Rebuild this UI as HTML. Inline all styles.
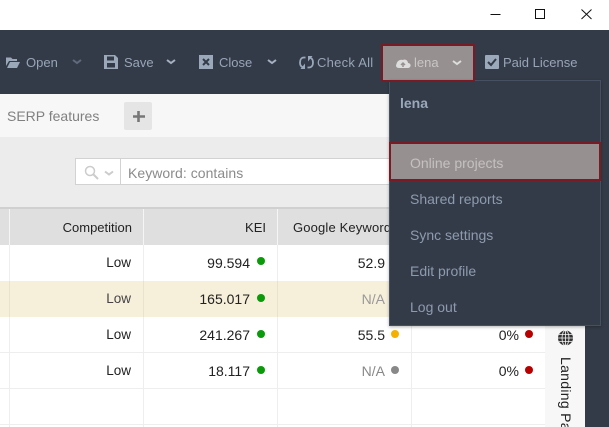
<!DOCTYPE html>
<html><head><meta charset="utf-8">
<style>
html,body{margin:0;padding:0;background:#fff}
#p{position:relative;width:609px;height:427px;overflow:hidden;background:#fff;font-family:"Liberation Sans",sans-serif;font-size:14px;color:#222}
.a{position:absolute}
.t{position:absolute;white-space:nowrap;line-height:16px}
.tb{color:#97a5b7;font-size:13px;top:55px}
.r{position:absolute;white-space:nowrap;line-height:16px;text-align:right}
.dot{position:absolute;width:8px;height:8px;border-radius:50%}
.m{position:absolute;left:410px;color:#8d9bae;font-size:14px;line-height:16px;white-space:nowrap}
svg{position:absolute;overflow:visible}
</style></head><body><div id="p">
<!-- window buttons -->
<svg style="left:0;top:0" width="609" height="30"><path d="M490.500 14.500H500.500" stroke="#111" fill="none"/><rect x="535.500" y="9.500" width="9" height="9" fill="none" stroke="#111"/><path d="M581.500 9.500L591.500 19M591.500 9.500L581.500 19" stroke="#111" fill="none"/></svg>
<!-- toolbar -->
<div class="a" style="left:0;top:30px;width:609px;height:64px;background:#343b48"></div>
<svg style="left:0;top:0" width="609" height="94">
<path d="M6 66V57.500H11L12.500 59H17V61H9L6 66ZM7 68L10 62H20L17 68Z" fill="#9aa8ba"/>
<path d="M73 60l4 3 4-3" stroke="#5f6b7c" stroke-width="2" fill="none"/>
<path d="M104 55H115L118 58V69H104ZM107 56.500V60.500H114V56.500ZM107 63V67.500H115V63Z" fill="#9aa8ba" fill-rule="evenodd"/>
<path d="M167 60l4 3 4-3" stroke="#a5b1c1" stroke-width="2" fill="none"/>
<rect x="199" y="55" width="14" height="14" fill="#9aa8ba"/><path d="M203 59l6 6M209 59l-6 6" stroke="#343b48" stroke-width="2"/>
<path d="M268 60l4 3 4-3" stroke="#a5b1c1" stroke-width="2" fill="none"/>
<path d="M305.500 57.500H304C301.500 57.500 300 59.500 300 62.500C300 64.800 301 66.500 302.500 67.200" stroke="#9aa8ba" stroke-width="1.800" fill="none"/>
<path d="M305 63.500V69H300.500Z" fill="#9aa8ba"/>
<path d="M307.500 67.500H309C311.500 67.500 313 65.500 313 62.500C313 60.200 312 58.500 310.500 57.800" stroke="#9aa8ba" stroke-width="1.800" fill="none"/>
<path d="M308 61.500V56H312.500Z" fill="#9aa8ba"/>
</svg>
<div class="t tb" style="left:26px">Open</div>
<div class="t tb" style="left:124px">Save</div>
<div class="t tb" style="left:219px">Close</div>
<div class="t tb" style="left:317px;letter-spacing:.25px">Check All</div>
<div class="a" style="left:381px;top:44px;width:94px;height:38px;box-sizing:border-box;background:#979090;border:2px solid #7a1a24"></div>
<svg style="left:0;top:0" width="609" height="94">
<path d="M399 68C396 68 395.500 65.500 396.500 64C397 61 400 59 403 60C405 58.500 408 60.500 408 63C410 63 411 65 410.500 66C410 68 408 68 408 68Z" fill="#ddd"/><path d="M403 67V63.500M401 65L403 63L405 65" stroke="#979090" stroke-width="1.500" fill="none"/>
<path d="M453 61l4 3 4-3" stroke="#ddd" stroke-width="2" fill="none"/>
<rect x="485" y="55" width="14" height="14" rx="1" fill="#9aa8ba"/><path d="M488 62l3 3 5-6" stroke="#343b48" stroke-width="2" fill="none"/>
</svg>
<div class="t" style="left:414px;top:55px;font-size:13px;color:#c9c6c6">lena</div>
<div class="t tb" style="left:503px">Paid License</div>
<!-- sub bar -->
<div class="a" style="left:0;top:94px;width:390px;height:43px;background:#f7f7f7"></div>
<div class="t" style="left:7px;top:108px;color:#808080">SERP features</div>
<div class="a" style="left:124px;top:102px;width:28px;height:28px;border-radius:2px;background:#e5e5e5"></div>
<svg style="left:0;top:0" width="200" height="130"><path d="M133 116.500H145M138.500 111V122" stroke="#777" stroke-width="2.600" fill="none"/></svg>
<!-- filter bar -->
<div class="a" style="left:0;top:137px;width:390px;height:70px;background:#ececec"></div>
<div class="a" style="left:0;top:207px;width:545px;height:2px;background:#d0d0d0"></div>
<div class="a" style="left:75px;top:158px;width:320px;height:27px;box-sizing:border-box;background:#fff;border:1px solid #d2d2d2"></div>
<div class="a" style="left:120px;top:158px;width:1px;height:27px;background:#d2d2d2"></div>
<svg style="left:0;top:0" width="130" height="190"><circle cx="90" cy="171" r="4.500" fill="none" stroke="#ccc" stroke-width="1.500"/><path d="M93.500 174.500L98 179" stroke="#ccc" stroke-width="2"/><path d="M105 171.500l4 3 4-3" stroke="#ccc" stroke-width="2" fill="none"/></svg>
<div class="t" style="left:128px;top:165px;color:#8b8b8b;letter-spacing:.05px">Keyword: contains</div>
<!-- table header -->
<div class="a" style="left:0;top:209px;width:545px;height:36px;background:#dfdfdf"></div>
<div class="a" style="left:0;top:281px;width:545px;height:36px;background:#f6efd9"></div>
<!-- gridlines -->
<div class="a" style="left:0;top:352px;width:545px;height:1px;background:#eee"></div>
<div class="a" style="left:0;top:388px;width:545px;height:1px;background:#eee"></div>
<div class="a" style="left:0;top:424px;width:545px;height:1px;background:#eee"></div>
<div class="a" style="left:9px;top:209px;width:1px;height:36px;background:#f5f5f5"></div>
<div class="a" style="left:143px;top:209px;width:1px;height:36px;background:#f5f5f5"></div>
<div class="a" style="left:277px;top:209px;width:1px;height:36px;background:#f5f5f5"></div>
<div class="a" style="left:9px;top:245px;width:1px;height:182px;background:#eee"></div>
<div class="a" style="left:143px;top:245px;width:1px;height:182px;background:#eee"></div>
<div class="a" style="left:277px;top:245px;width:1px;height:182px;background:#eee"></div>
<div class="a" style="left:411px;top:245px;width:1px;height:182px;background:#eee"></div>
<div class="a" style="left:9px;top:281px;width:1px;height:36px;background:#e9e2cc"></div>
<div class="a" style="left:143px;top:281px;width:1px;height:36px;background:#e9e2cc"></div>
<div class="a" style="left:277px;top:281px;width:1px;height:36px;background:#e9e2cc"></div>
<!-- header text -->
<div class="r" style="right:477px;top:220px;font-size:13px">Competition</div>
<div class="r" style="right:343px;top:220px;font-size:13px">KEI</div>
<div class="t" style="left:293px;top:220px;font-size:13px;letter-spacing:.15px">Google Keyword</div>
<!-- rows -->
<div class="r" style="right:478px;top:255px;font-size:13.500px">Low</div>
<div class="r" style="right:478px;top:291px;font-size:13.500px;color:#444">Low</div>
<div class="r" style="right:478px;top:327px;font-size:13.500px">Low</div>
<div class="r" style="right:478px;top:363px;font-size:13.500px">Low</div>
<div class="r" style="right:359px;top:255px">99.594</div>
<div class="r" style="right:359px;top:291px">165.017</div>
<div class="r" style="right:359px;top:327px">241.267</div>
<div class="r" style="right:359px;top:363px">18.117</div>
<div class="dot" style="left:257px;top:257px;background:#0a9a0a"></div>
<div class="dot" style="left:257px;top:294px;background:#0a9a0a"></div>
<div class="dot" style="left:257px;top:330px;background:#0a9a0a"></div>
<div class="dot" style="left:257px;top:366px;background:#0a9a0a"></div>
<div class="r" style="right:224px;top:255px">52.9</div>
<div class="r" style="right:224px;top:291px;color:#999">N/A</div>
<div class="r" style="right:224px;top:327px">55.5</div>
<div class="r" style="right:224px;top:363px;color:#888">N/A</div>
<div class="dot" style="left:391px;top:330px;background:#f5b000"></div>
<div class="dot" style="left:391px;top:366px;background:#888"></div>
<div class="r" style="right:90px;top:327px">0%</div>
<div class="r" style="right:90px;top:363px">0%</div>
<div class="dot" style="left:525px;top:330px;background:#b80000"></div>
<div class="dot" style="left:525px;top:366px;background:#b80000"></div>
<!-- right panel -->
<div class="a" style="left:545px;top:94px;width:40px;height:333px;background:#f7f7f7"></div>
<div class="a" style="left:585px;top:94px;width:24px;height:333px;background:#343b48"></div>
<svg style="left:0;top:0" width="609" height="427"><circle cx="565.500" cy="338" r="7.500" fill="#333"/><path d="M558 338H573M559 334.500H572M559 341.500H572M565.500 330.500V345.500" stroke="#f7f7f7" stroke-width=".8" fill="none"/><ellipse cx="565.500" cy="338" rx="3.500" ry="7.500" fill="none" stroke="#f7f7f7" stroke-width=".8"/></svg>
<div class="t" style="left:558px;top:357px;transform-origin:0 0;transform:translate(16px,0) rotate(90deg);font-size:14px;letter-spacing:.3px;color:#222">Landing Page</div>
<!-- dropdown -->
<div class="a" style="left:389px;top:80px;width:212px;height:246px;box-sizing:border-box;background:#343b48;border:1px solid #465063;box-shadow:0 1px 3px rgba(0,0,0,.3)"></div>
<div class="a" style="left:381px;top:44px;width:94px;height:38px;box-sizing:border-box;border:2px solid #7a1a24"></div>
<div class="t" style="left:400px;top:95px;color:#9aa8ba;font-weight:bold">lena</div>
<div class="a" style="left:389px;top:142px;width:212px;height:39px;box-sizing:border-box;background:#979090;border:2px solid #7a1a24"></div>
<div class="m" style="top:155px;color:#c4c1c1">Online projects</div>
<div class="m" style="top:191px">Shared reports</div>
<div class="m" style="top:227px">Sync settings</div>
<div class="m" style="top:263px">Edit profile</div>
<div class="m" style="top:299px">Log out</div>
</div></body></html>
